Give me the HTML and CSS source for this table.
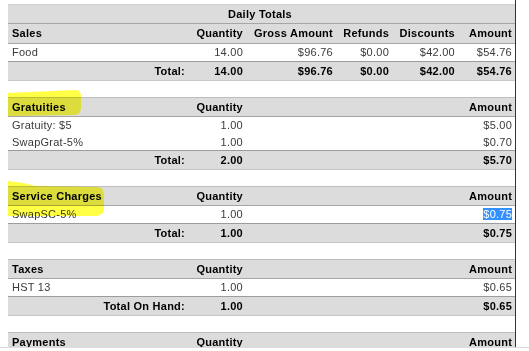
FILE: index.html
```html
<!DOCTYPE html>
<html>
<head>
<meta charset="utf-8">
<title>Daily Totals</title>
<link rel="stylesheet" href="styles.css">
</head>
<body>
<div class="viewport">
  <div class="frame">
    <table class="report">
      <colgroup><col class="c-name"><col class="c-qty"><col class="c-gross"><col class="c-ref"><col class="c-disc"><col class="c-amt"></colgroup>
      <tr class="title"><td colspan="6">Daily Totals</td></tr>
      <tr class="head"><td>Sales</td><td class="r">Quantity</td><td class="r">Gross Amount</td><td class="r">Refunds</td><td class="r">Discounts</td><td class="r">Amount</td></tr>
      <tr class="data"><td>Food</td><td class="r">14.00</td><td class="r">$96.76</td><td class="r">$0.00</td><td class="r">$42.00</td><td class="r">$54.76</td></tr>
      <tr class="total"><td class="r">Total:</td><td class="r">14.00</td><td class="r">$96.76</td><td class="r">$0.00</td><td class="r">$42.00</td><td class="r">$54.76</td></tr>
    </table>

    <table class="report">
      <colgroup><col class="c-name"><col class="c-qty"><col class="c-gross"><col class="c-ref"><col class="c-disc"><col class="c-amt"></colgroup>
      <tr class="head top"><td>Gratuities</td><td class="r">Quantity</td><td class="r" colspan="4">Amount</td></tr>
      <tr class="data"><td>Gratuity: $5</td><td class="r">1.00</td><td class="r" colspan="4">$5.00</td></tr>
      <tr class="data short"><td>SwapGrat-5%</td><td class="r">1.00</td><td class="r" colspan="4">$0.70</td></tr>
      <tr class="total"><td class="r">Total:</td><td class="r">2.00</td><td class="r" colspan="4">$5.70</td></tr>
    </table>

    <table class="report">
      <colgroup><col class="c-name"><col class="c-qty"><col class="c-gross"><col class="c-ref"><col class="c-disc"><col class="c-amt"></colgroup>
      <tr class="head top"><td>Service Charges</td><td class="r">Quantity</td><td class="r" colspan="4">Amount</td></tr>
      <tr class="data"><td>SwapSC-5%</td><td class="r">1.00</td><td class="r" colspan="4"><span class="sel">$0.75</span></td></tr>
      <tr class="total"><td class="r">Total:</td><td class="r">1.00</td><td class="r" colspan="4">$0.75</td></tr>
    </table>

    <table class="report">
      <colgroup><col class="c-name"><col class="c-qty"><col class="c-gross"><col class="c-ref"><col class="c-disc"><col class="c-amt"></colgroup>
      <tr class="head top"><td>Taxes</td><td class="r">Quantity</td><td class="r" colspan="4">Amount</td></tr>
      <tr class="data"><td>HST 13</td><td class="r">1.00</td><td class="r" colspan="4">$0.65</td></tr>
      <tr class="total"><td class="r">Total On Hand:</td><td class="r">1.00</td><td class="r" colspan="4">$0.65</td></tr>
    </table>

    <table class="report">
      <colgroup><col class="c-name"><col class="c-qty"><col class="c-gross"><col class="c-ref"><col class="c-disc"><col class="c-amt"></colgroup>
      <tr class="head top"><td>Payments</td><td class="r">Quantity</td><td class="r" colspan="4">Amount</td></tr>
    </table>

    <svg class="marker" width="529" height="351" viewBox="0 0 529 351">
      <path d="M8,93 L75,90 Q82,90 81,99 L81,109 Q80,115 74,115 L8,116 Z"/>
      <path d="M8,181 Q22,182 36,186 L98,187 Q105,188 104,198 L104,209 Q103,216 96,216 L8,216 Z"/>
    </svg>
  </div>
</div>
</body>
</html>
```

FILE: styles.css
```css
html, body {
  margin: 0;
  padding: 0;
  background: #ffffff;
}

.viewport {
  height: 347px;
  border-bottom: 1px solid #dcdcdc;
  overflow: hidden;
}

.frame {
  position: relative;
  width: 507px;
  height: 100%;
  padding: 4px 0 0 8px;
  box-sizing: content-box;
  border-right: 1px solid #333333;
  display: flex;
  flex-direction: column;
  gap: 16px;
}

.report {
  width: 507px;
  table-layout: fixed;
  border-collapse: separate;
  border-spacing: 0;
  font-family: "Liberation Sans", Arial, sans-serif;
  font-size: 11px;
  letter-spacing: 0.25px;
  color: #3a3a3a;
  flex: none;
}

.c-name { width: 180px; }
.c-qty { width: 58px; }
.c-gross { width: 90px; }
.c-ref { width: 56px; }
.c-disc { width: 66px; }
.c-amt { width: 57px; }

.report td {
  box-sizing: border-box;
  padding: 0 3px 0 4px;
  line-height: 13px;
  white-space: nowrap;
  vertical-align: middle;
}

.report td.r { text-align: right; }

.title td {
  height: 20px;
  background: #dcdcdc;
  border-top: 1px solid #d0d0d0;
  border-bottom: 1px solid #a6a6a6;
  text-align: center;
  font-weight: bold;
  color: #000000;
  padding-left: 0;
}

.head td {
  height: 20px;
  background: #dcdcdc;
  border-bottom: 1px solid #a6a6a6;
  font-weight: bold;
  color: #000000;
}

.head.top td {
  border-top: 1px solid #bdbdbd;
}

.data td {
  height: 17px;
  background: #ffffff;
}

.data.short td {
  height: 16px;
}

.total td {
  height: 20px;
  background: #dcdcdc;
  border-top: 1px solid #9c9c9c;
  border-bottom: 1px solid #c6c6c6;
  font-weight: bold;
  color: #000000;
}

.sel {
  background: #3391ff;
  color: #ffffff;
}

.marker {
  position: absolute;
  left: 0;
  top: 0;
  pointer-events: none;
  mix-blend-mode: multiply;
}

.marker path {
  fill: rgb(255, 255, 70);
}
```
